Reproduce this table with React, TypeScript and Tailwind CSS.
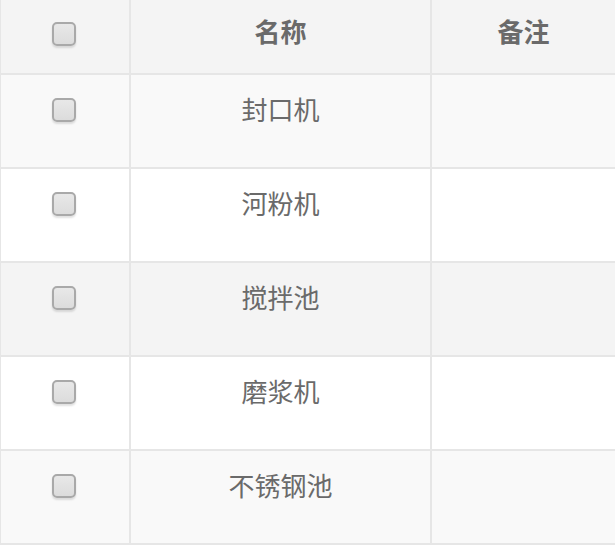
import React from 'react';

const rows = [
  { name: '封口机', note: '', bg: 'bg-[#f9f9f9]' },
  { name: '河粉机', note: '', bg: 'bg-white' },
  { name: '搅拌池', note: '', bg: 'bg-[#f4f4f4]' },
  { name: '磨浆机', note: '', bg: 'bg-white' },
  { name: '不锈钢池', note: '', bg: 'bg-[#f9f9f9]' },
];

function Checkbox() {
  return (
    <span className="block w-[24px] h-[24px] rounded-[5px] border-2 border-[#a9a9a9] bg-gradient-to-b from-[#e8e8e8] to-[#dcdcdc] shadow-[0_2px_2px_rgba(0,0,0,0.12)]" />
  );
}

export default function App() {
  return (
    <div className="w-[615px] bg-white text-[#6a6a6a] font-['Open_Sans','Noto_Sans_CJK_SC',sans-serif]">
      <div className="grid grid-cols-[130px_301px_1fr] border-l border-[#e6e6e6]">
        {/* header */}
        <div className="h-[75px] bg-[#f4f4f4] border-r-2 border-b-2 border-[#e6e6e6] flex items-center justify-center pb-[6px] pr-[3px]">
          <Checkbox />
        </div>
        <div className="h-[75px] bg-[#f4f4f4] border-r-2 border-b-2 border-[#e6e6e6] flex items-center justify-center pb-[8px] text-[26px] font-bold">
          名称
        </div>
        <div className="h-[75px] bg-[#f4f4f4] border-b-2 border-[#e6e6e6] flex items-center justify-center pb-[8px] text-[26px] font-bold">
          备注
        </div>

        {rows.map((r) => (
          <React.Fragment key={r.name}>
            <div className={`h-[94px] ${r.bg} border-r-2 border-b-2 border-[#e6e6e6] flex justify-center pt-[23px] pr-[3px]`}>
              <Checkbox />
            </div>
            <div className={`h-[94px] ${r.bg} border-r-2 border-b-2 border-[#e6e6e6] flex justify-center pt-[17px] text-[26px] leading-[36px]`}>
              {r.name}
            </div>
            <div className={`h-[94px] ${r.bg} border-b-2 border-[#e6e6e6] pt-[17px] text-[26px] leading-[36px]`}>
              {r.note}
            </div>
          </React.Fragment>
        ))}
      </div>
    </div>
  );
}
